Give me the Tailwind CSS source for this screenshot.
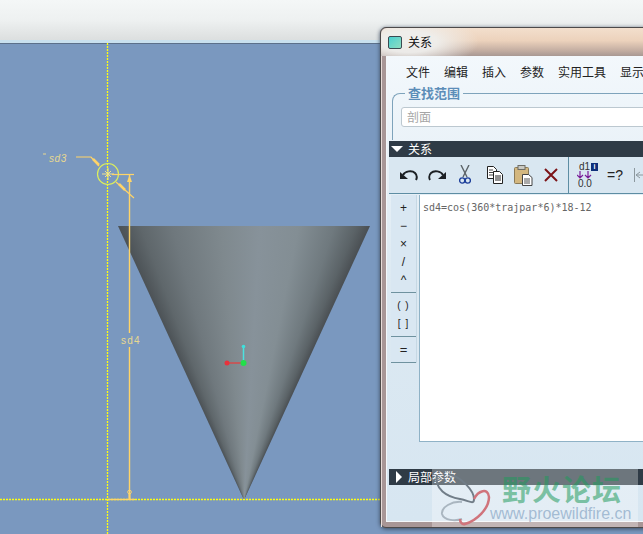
<!DOCTYPE html>
<html lang="zh">
<head>
  <meta charset="UTF-8" />
  <title>关系</title>
  <script src="https://cdn.jsdelivr.net/npm/@tailwindcss/browser@4"></script>
</head>
<body class="w-[643px] h-[534px] overflow-hidden bg-[#7a98bf] font-['Noto_Sans_CJK_SC','Liberation_Sans',sans-serif]">
  <div class="relative w-[643px] h-[534px] overflow-hidden">
    <!-- Top band -->
    <div class="h-[40px] bg-gradient-to-b from-[#f4f7f7] via-[#eef1f1] to-[#dcdfdf]"></div>
    <div class="h-[3px] bg-[#c9e0ee]"></div>
    <div class="h-px bg-[#5c708a]"></div>

    <!-- Cone -->
    <div class="absolute left-[118px] top-[226px] w-[252px] h-[274px] [clip-path:polygon(0_0,100%_0,50%_100%)] bg-[conic-gradient(from_-24.7deg_at_50%_100%,#4c5256_0deg,#5f676b_4deg,#6f787d_10deg,#7f898e_20deg,#87929a_28deg,#838e94_36deg,#6f797e_43deg,#5b6367_47deg,#4a4f53_49.4deg)]"></div>

    <!-- Datum lines and dimensions -->
    <svg class="absolute left-0 top-0" width="643" height="534" viewBox="0 0 643 534" fill="none">
      <defs>
        <linearGradient id="rim" x1="0" x2="1" y1="0" y2="0">
          <stop offset="0" stop-color="#7a8894" />
          <stop offset="0.45" stop-color="#c4ccd2" />
          <stop offset="0.62" stop-color="#eef2f4" />
          <stop offset="1" stop-color="#7e8b96" />
        </linearGradient>
      </defs>
      <line x1="118" y1="226.5" x2="369" y2="226.5" stroke="url(#rim)" />
      <line x1="107.5" y1="43" x2="107.5" y2="534" stroke="#ffff10" stroke-width="1.3" stroke-dasharray="2 1" />
      <line x1="0" y1="499.5" x2="380" y2="499.5" stroke="#ffff10" stroke-width="1.3" stroke-dasharray="2 1" />
      <circle cx="108" cy="174" r="10.5" stroke="#dcee5c" stroke-width="1.2" />
      <path d="M102 174h12M108 168v12M105 171l3 3-3 3M111 171l-3 3 3 3" stroke="#f0e48e" />
      <path d="M76 157h15l8 9M116 182l18 16" stroke="#ffd468" stroke-width="1.2" />
      <path d="M93 159l6 6M119 184l6 6" stroke="#ffd468" stroke-width="2.500" />
      <path d="M112 174.500h22" stroke="#ffd468" stroke-width="1.200" />
      <path d="M129.500 174v159M129.500 347v152" stroke="#ffd468" stroke-width="1.400" />
      <path d="M127 182l2.500-7 2.500 7z" fill="#ffd468" />
      <circle cx="129.500" cy="492" r="1.800" stroke="#ffd468" />
      <path d="M108 499.500h27" stroke="#ffd468" stroke-width="1.400" />
      <path d="M129.500 493v6" stroke="#ffd468" stroke-width="2" />
      <text x="49" y="162" font-family="'Liberation Sans',sans-serif" font-size="10" font-style="italic" letter-spacing="0.6" fill="#e8d890">sd3</text>
      <text x="121" y="344" font-family="'Liberation Sans',sans-serif" font-size="10" letter-spacing="1.200" fill="#e8d890">sd4</text>
      <path d="M43 154h3" stroke="#e8d890" />
      <!-- Axis triad -->
      <line x1="243.500" y1="347" x2="243.500" y2="362" stroke="#4ce2e0" stroke-width="1.500" />
      <line x1="228" y1="363" x2="243" y2="363" stroke="#d64a4a" stroke-width="1.500" />
      <circle cx="243.500" cy="346.500" r="1.800" fill="#3fe0dc" />
      <circle cx="227" cy="363" r="2.500" fill="#e8323c" />
      <circle cx="243.500" cy="363" r="3" fill="#22e04a" />
    </svg>

    <!-- Relations dialog -->
    <div class="absolute left-[380px] top-[27px] w-[290px] h-[501px] flex flex-col rounded-t-md rounded-bl-md bg-[#a89696] border border-[#4d4a4a] shadow-[0_1px_4px_#3b4a5e]">
      <div class="h-[28px] shrink-0 flex items-center gap-[6px] pl-[7px] rounded-t-md bg-[radial-gradient(ellipse_70px_26px_at_28px_14px,#efefedee_40%,#efefed00_100%),linear-gradient(180deg,#f3dfcd_0%,#ecd2bc_45%,#c4aea2_80%,#a89893_100%)]">
        <span class="w-[14px] h-[13px] border border-[#3a4a52] rounded-[2px] bg-gradient-to-br from-[#46d0d0] to-[#8cdcc0]"></span>
        <span class="text-[12px] leading-none text-[#111]">关系</span>
      </div>
      <div class="flex-1 flex min-h-0 pl-[4px] pb-[5px] border-l border-[#e8dcd8]">
        <div class="flex-1 min-w-0 flex flex-col border-l border-b border-[#f4f8fb] bg-gradient-to-b from-[#f3f8fc] via-[#dce9f2] to-[#d7e6f1]">
          <!-- Menu -->
          <div class="h-[31px] shrink-0 flex items-center gap-[14px] pl-[19px] pt-[1px] text-[12px] leading-none text-[#222]">
            <span>文件</span><span>编辑</span><span>插入</span><span>参数</span><span>实用工具</span><span>显示</span>
          </div>
          <!-- Search group -->
          <fieldset class="ml-[5px] h-[54px] shrink-0 pl-[8px] border-t border-l border-[#7ea3bb] rounded-tl-lg -mt-[1px]">
            <legend class="ml-[4px] px-[3px] text-[13px] leading-[14px] font-bold text-[#5c8db8]">查找范围</legend>
            <div class="h-[20px] mt-[7px] flex items-center pl-[5px] bg-white border border-[#bcc8d0] rounded-[3px] text-[12px] leading-none text-[#a5a5a5]">剖面</div>
          </fieldset>
          <!-- Section bar -->
          <div class="h-[16px] shrink-0 mt-[1px] ml-[2px] flex items-center gap-[5px] pl-[2px] bg-[#2f3b46] text-[12px] leading-none text-white">
            <span class="w-0 h-0 border-x-[6px] border-x-transparent border-t-[6px] border-t-white"></span>
            <span>关系</span>
          </div>
          <!-- Toolbar -->
          <div class="h-[37px] shrink-0 ml-[2px] pl-[10px] flex items-center border-b border-[#5d8da3] bg-[#d9e7f1]">
            <svg width="20" height="14" viewBox="0 0 20 14" fill="none" class="mr-[8px]">
              <path d="M4 7C6 3 13 2 16 5c2 2 2 5 1 7" stroke="#1c2024" stroke-width="2" />
              <path d="M1 4l8 7H1z" fill="#1c2024" />
            </svg>
            <svg width="20" height="14" viewBox="0 0 20 14" fill="none" class="mr-[12px]">
              <path d="M16 7C14 3 7 2 4 5c-2 2-2 5-1 7" stroke="#1c2024" stroke-width="1.800" />
              <path d="M19 4l-8 7h8z" fill="#1c2024" />
            </svg>
            <svg width="12" height="20" viewBox="0 0 12 20" fill="none" class="mr-[15px]">
              <path d="M2 0l6 12M10 0L4 12" stroke="#5c6468" stroke-width="1.400" />
              <circle cx="3.200" cy="15.500" r="2.600" stroke="#1d3f9a" stroke-width="1.400" />
              <circle cx="8.800" cy="15.500" r="2.600" stroke="#1d3f9a" stroke-width="1.400" />
            </svg>
            <svg width="18" height="18" viewBox="0 0 18 18" fill="none" class="mr-[10px]">
              <path d="M1.500 .5h6l3 3v9h-9z" fill="#fff" stroke="#222" />
              <path d="M3 4h4M3 6.500h5M3 9h5" stroke="#444" />
              <path d="M7.500 5.500h6l3 3v9h-9z" fill="#fff" stroke="#222" />
              <path d="M9 10h6M9 12h6M9 14h6" stroke="#222" />
            </svg>
            <svg width="19" height="21" viewBox="0 0 19 21" fill="none" class="mr-[11px]">
              <rect x=".5" y="2.500" width="14" height="16" rx="1" fill="#d3b77f" stroke="#8a7a58" />
              <rect x="4" y=".5" width="7" height="4" fill="#c9c9c2" stroke="#6d6d66" />
              <path d="M8.500 9.500h6l3.500 3v8h-9.500z" fill="#fff" stroke="#444" />
              <path d="M10 14h6M10 16h6M10 18h6" stroke="#555" />
            </svg>
            <svg width="14" height="14" viewBox="0 0 14 14" fill="none" class="mr-[10px]">
              <path d="M1 1l12 12M13 1L1 13" stroke="#7c1418" stroke-width="2" />
            </svg>
            <div class="w-px h-[37px] bg-[#5d8da3] mr-[8px]"></div>
            <div class="relative w-[22px] h-[26px] mr-[8px] text-[10px] leading-none text-[#333] font-['Liberation_Sans',sans-serif]">
              <span class="absolute left-[2px] top-0">d1</span>
              <svg class="absolute left-0 top-[9px]" width="16" height="8" viewBox="0 0 16 8" fill="none">
                <path d="M3 0v7M0 4l3 3 3-3M11 0v7M8 4l3 3 3-3" stroke="#7a1f9a" stroke-width="1.200" />
              </svg>
              <span class="absolute left-[1px] top-[17px]">0.0</span>
              <span class="absolute left-[14px] top-[1px] w-[7px] h-[8px] bg-[#0f2f7a] text-white text-[7px] leading-[8px] text-center font-bold">i</span>
            </div>
            <span class="mr-[11px] text-[14px] leading-none text-[#222] font-['Liberation_Sans',sans-serif]">=?</span>
            <svg width="16" height="16" viewBox="0 0 16 16" fill="none">
              <path d="M.5 1v14M2 8h14M2 8l4-3M2 8l4 3" stroke="#8c989e" />
            </svg>
          </div>
          <!-- Editor area -->
          <div class="flex-1 min-h-0 ml-[4px] flex items-start gap-[2px]">
            <div class="w-[26px] shrink-0 mt-[1px] flex flex-col items-center bg-[#d9e7f2] border-r border-[#c6d8e4] text-[#222] font-['Liberation_Sans',sans-serif] text-[12px] leading-none">
              <div class="w-full h-[98px] flex flex-col items-center pt-[7px] gap-[5px] border-b border-[#6f929f]">
                <span class="h-[13px]">+</span><span class="h-[13px]">−</span><span class="h-[13px]">×</span><span class="h-[13px]">/</span><span class="h-[13px]">^</span>
              </div>
              <div class="w-full h-[44px] flex flex-col items-center pt-[8px] gap-[5px] border-b border-[#6f929f] tracking-[1px]">
                <span class="h-[13px] text-[10px]">( )</span><span class="h-[13px] text-[10px]">[ ]</span>
              </div>
              <div class="w-full h-[26px] flex items-center justify-center border-b border-[#6f929f] text-[13px]">=</div>
            </div>
            <div class="flex-1 min-w-0 h-[247px] mt-[1px] bg-white border-l border-b border-[#8fb2c6] pl-[3px] pt-[8px] font-['DejaVu_Sans_Mono',monospace] text-[10px] leading-none text-[#666]">sd4=cos(360*trajpar*6)*18-12</div>
          </div>
          <!-- Local parameters bar -->
          <div class="h-[16px] shrink-0 mb-[36px] ml-[2px] flex items-center gap-[6px] pl-[7px] bg-[#2f3b46] text-[12px] leading-none text-white">
            <span class="w-0 h-0 border-y-[6px] border-y-transparent border-l-[6px] border-l-white"></span>
            <span>局部参数</span>
          </div>
        </div>
      </div>
    </div>

    <!-- Forum watermark -->
    <div class="absolute left-[432px] top-[469px] w-[206px] h-[58px] bg-white/30"></div>
    <svg class="absolute left-[432px] top-[469px]" width="70" height="65" viewBox="0 0 70 65" fill="none">
      <path d="M5 6C2 20 15 28 28 30c10 2 14 6 14 0C42 22 30 8 16 5" stroke="#717d88" stroke-width="2" />
      <path d="M30 33C20 32 9 38 10 45c2 7 14 7 20 5" stroke="#aab6c0" stroke-width="2" />
      <path d="M42 30c4-8 14-12 15-2 0 12-13 24-24 27-3 1-5-2-5-5" stroke="#d0747c" stroke-width="2.500" />
    </svg>
    <div class="absolute left-[502px] top-[473px] text-[29px] leading-[30px] tracking-[1px] font-bold whitespace-nowrap text-[#1e9a5c]/55">野火论坛</div>
    <div class="absolute left-[490px] top-[505px] text-[16px] leading-[18px] whitespace-nowrap font-['Liberation_Sans',sans-serif] text-[#7f9fc0]/65">www.proewildfire.cn</div>
  </div>
</body>
</html>
